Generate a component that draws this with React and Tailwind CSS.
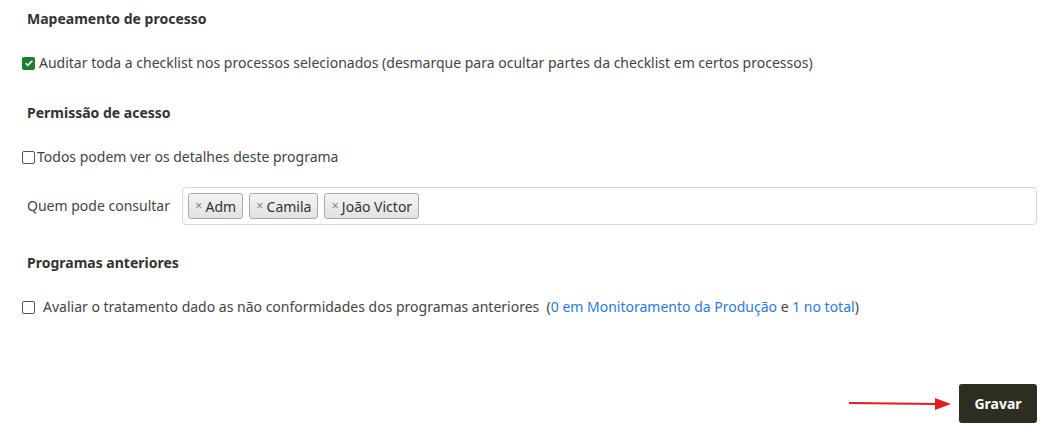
const font = { fontFamily: '"Noto Sans", "Open Sans", sans-serif' };

function Tag({ label }) {
  return (
    <span className="flex h-[26px] items-center gap-[3px] rounded-[3px] border border-[#aaaaaa] bg-gradient-to-b from-[#f4f4f4] to-[#e2e2e2] px-[6px] text-[14px] text-[#333]">
      <span className="text-[13px] text-[#888]">×</span>
      {label}
    </span>
  );
}

function Box({ checked }) {
  if (checked) {
    return (
      <span className="flex h-[13px] w-[13px] items-center justify-center rounded-[2px] bg-[#1e7e34]">
        <svg viewBox="0 0 12 12" className="h-[10px] w-[10px]">
          <path d="M2 6.3l2.6 2.6L10 3.3" fill="none" stroke="white" strokeWidth="2" />
        </svg>
      </span>
    );
  }
  return <span className="h-[13px] w-[13px] rounded-[2px] border border-[#555] bg-white" />;
}

export default function App() {
  return (
    <div className="h-[445px] w-[1062px] bg-white text-[14px] text-[#444]" style={font}>
      <div className="pl-[27px] pt-[9px] text-[14px] font-bold leading-[20px] text-[#333]">
        Mapeamento de processo
      </div>
      <label className="mt-[24px] flex items-center gap-[4px] pl-[22px] leading-[20px]">
        <Box checked />
        Auditar toda a checklist nos processos selecionados (desmarque para ocultar partes da checklist em certos processos)
      </label>

      <div className="mt-[30px] pl-[27px] text-[14px] font-bold leading-[20px] text-[#333]">
        Permissão de acesso
      </div>
      <label className="mt-[24px] flex items-center gap-[2px] pl-[22px] leading-[20px]">
        <Box />
        Todos podem ver os detalhes deste programa
      </label>
      <div className="mt-[20px] flex items-center pl-[27px] pr-[25px]">
        <span className="w-[155px] leading-[20px]">Quem pode consultar</span>
        <div className="flex h-[38px] flex-1 items-center gap-[6px] rounded-[4px] border border-[#d6d6d6] px-[5px]">
          <Tag label="Adm" />
          <Tag label="Camila" />
          <Tag label="João Victor" />
        </div>
      </div>

      <div className="mt-[28px] pl-[27px] text-[14px] font-bold leading-[20px] text-[#333]">
        Programas anteriores
      </div>
      <label className="mt-[24px] flex items-center gap-[8px] pl-[22px] leading-[20px]">
        <Box />
        <span>
          Avaliar o tratamento dado as não conformidades dos programas anteriores{"\u00a0\u00a0"}(
          <a className="text-[#2a7ae2]">0 em Monitoramento da Produção</a> e{" "}
          <a className="text-[#2a7ae2]">1 no total</a>)
        </span>
      </label>

      <div className="mt-[67px] flex items-center justify-end gap-[6px] pr-[25px]">
        <svg width="104" height="14" viewBox="0 0 104 14">
          <line x1="0" y1="6" x2="88" y2="7" stroke="#e11d1d" strokeWidth="2" />
          <polygon points="86,1 102,7 86,13" fill="#e11d1d" />
        </svg>
        <button className="h-[39px] w-[78px] rounded-[3px] bg-[#2e2e20] text-[14px] font-bold text-white">
          Gravar
        </button>
      </div>
    </div>
  );
}
